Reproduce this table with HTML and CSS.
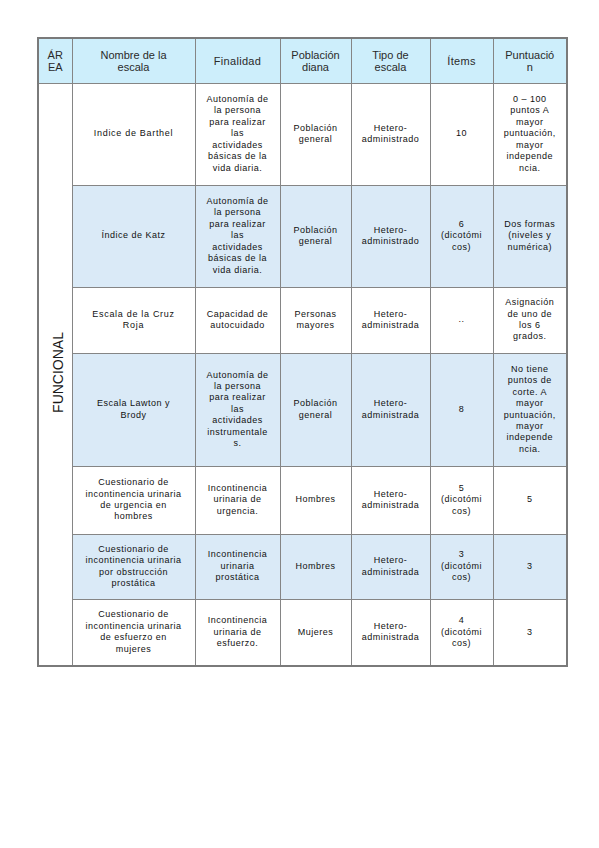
FILE: index.html
```html
<!DOCTYPE html>
<html lang="es">
<head>
<meta charset="utf-8">
<title>Escalas de valoración funcional</title>
<link rel="stylesheet" href="styles.css">
</head>
<body>
<table class="scales">
  <colgroup>
    <col class="c-area">
    <col class="c-name">
    <col class="c-fin">
    <col class="c-pob">
    <col class="c-tipo">
    <col class="c-items">
    <col class="c-punt">
  </colgroup>
  <thead>
    <tr class="head">
      <th>ÁR<br>EA</th>
      <th>Nombre de la<br>escala</th>
      <th class="spaced">Finalidad</th>
      <th>Población<br>diana</th>
      <th>Tipo de<br>escala</th>
      <th class="spaced">Ítems</th>
      <th>Puntuació<br>n</th>
    </tr>
  </thead>
  <tbody>
    <tr class="r1">
      <td class="area" rowspan="7"><span class="vert">FUNCIONAL</span></td>
      <td class="wide">Indice de Barthel</td>
      <td>Autonomía de<br>la persona<br>para realizar<br>las<br>actividades<br>básicas de la<br>vida diaria.</td>
      <td>Población<br>general</td>
      <td>Hetero-<br>administrado</td>
      <td>10</td>
      <td>0 – 100<br>puntos A<br>mayor<br>puntuación,<br>mayor<br>independe<br>ncia.</td>
    </tr>
    <tr class="r2 shade">
      <td>Índice de Katz</td>
      <td>Autonomía de<br>la persona<br>para realizar<br>las<br>actividades<br>básicas de la<br>vida diaria.</td>
      <td>Población<br>general</td>
      <td>Hetero-<br>administrado</td>
      <td>6<br>(dicotómi<br>cos)</td>
      <td>Dos formas<br>(niveles y<br>numérica)</td>
    </tr>
    <tr class="r3">
      <td class="wide">Escala de la Cruz<br>Roja</td>
      <td>Capacidad de<br>autocuidado</td>
      <td>Personas<br>mayores</td>
      <td>Hetero-<br>administrada</td>
      <td>..</td>
      <td>Asignación<br>de uno de<br>los 6<br>grados.</td>
    </tr>
    <tr class="r4 shade">
      <td>Escala Lawton y<br>Brody</td>
      <td>Autonomía de<br>la persona<br>para realizar<br>las<br>actividades<br>instrumentale<br>s.</td>
      <td>Población<br>general</td>
      <td>Hetero-<br>administrada</td>
      <td>8</td>
      <td>No tiene<br>puntos de<br>corte. A<br>mayor<br>puntuación,<br>mayor<br>independe<br>ncia.</td>
    </tr>
    <tr class="r5">
      <td>Cuestionario de<br>incontinencia urinaria<br>de urgencia en<br>hombres</td>
      <td>Incontinencia<br>urinaria de<br>urgencia.</td>
      <td>Hombres</td>
      <td>Hetero-<br>administrada</td>
      <td>5<br>(dicotómi<br>cos)</td>
      <td>5</td>
    </tr>
    <tr class="r6 shade">
      <td>Cuestionario de<br>incontinencia urinaria<br>por obstrucción<br>prostática</td>
      <td>Incontinencia<br>urinaria<br>prostática</td>
      <td>Hombres</td>
      <td>Hetero-<br>administrada</td>
      <td>3<br>(dicotómi<br>cos)</td>
      <td>3</td>
    </tr>
    <tr class="r7">
      <td>Cuestionario de<br>incontinencia urinaria<br>de esfuerzo en<br>mujeres</td>
      <td>Incontinencia<br>urinaria de<br>esfuerzo.</td>
      <td>Mujeres</td>
      <td>Hetero-<br>administrada</td>
      <td>4<br>(dicotómi<br>cos)</td>
      <td>3</td>
    </tr>
  </tbody>
</table>
</body>
</html>
```

FILE: styles.css
```css
html, body {
  margin: 0;
  padding: 0;
  background: #ffffff;
}

body {
  padding: 37px 0 0 37px;
  font-family: "Liberation Sans", Arial, sans-serif;
  color: #111111;
}

.scales {
  border-collapse: collapse;
  table-layout: fixed;
  width: 529px;
  border: 2px solid #7a7a7a;
}

.c-area { width: 34px; }
.c-name { width: 123px; }
.c-fin { width: 85px; }
.c-pob { width: 71px; }
.c-tipo { width: 79px; }
.c-items { width: 63px; }
.c-punt { width: 74px; }

.scales th,
.scales td {
  border: 1px solid #858585;
  text-align: center;
  vertical-align: middle;
  padding: 0 2px;
  white-space: nowrap;
  overflow: hidden;
}

.head {
  height: 45px;
  background: #cdeefb;
}

.scales th {
  font-weight: normal;
  font-size: 11px;
  line-height: 12px;
  color: #2a2a2a;
}

.scales th.spaced {
  letter-spacing: 0.3px;
}

.scales td {
  font-size: 9px;
  line-height: 11.4px;
  letter-spacing: 0.5px;
  color: #111111;
}

.scales td.wide {
  letter-spacing: 0.7px;
}

.shade {
  background: #daeaf7;
}

.r1 { height: 102px; }
.r2 { height: 102px; }
.r3 { height: 66px; }
.r4 { height: 113px; }
.r5 { height: 68px; }
.r6 { height: 65px; }
.r7 { height: 67px; }

.scales td.area {
  background: #ffffff;
  padding: 0 0 0 6px;
}

.vert {
  display: inline-block;
  writing-mode: vertical-rl;
  transform: rotate(180deg);
  font-size: 14px;
  letter-spacing: 0;
  color: #1a1a1a;
  line-height: 14px;
}
```
